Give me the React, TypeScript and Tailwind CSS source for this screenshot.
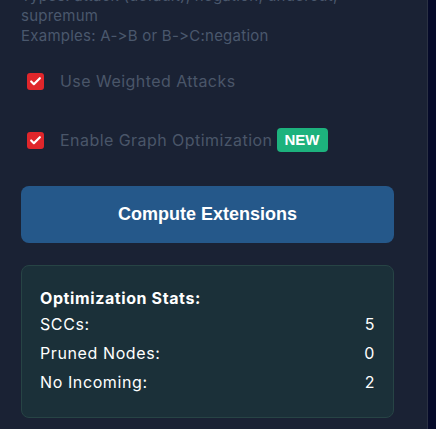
import { Check } from "lucide-react";

function CheckRow({ label, badge }: { label: string; badge?: boolean }) {
  return (
    <div className="flex items-center h-[26px]">
      <span className="ml-[6px] w-[17px] h-[17px] rounded-[3px] bg-[#e0262b] flex items-center justify-center">
        <Check className="w-[13px] h-[13px] text-white" strokeWidth={4} />
      </span>
      <span className="ml-[16px] text-[16px] tracking-[0.45px] text-[#4a5669]">{label}</span>
      {badge && (
        <span className="ml-[4px] h-[24px] px-[8px] rounded-[4px] bg-[#1db27d] text-white text-[15px] font-bold flex items-center font-['Liberation_Sans',sans-serif]">
          NEW
        </span>
      )}
    </div>
  );
}

export default function App() {
  const stats = [
    { label: "SCCs:", value: 5 },
    { label: "Pruned Nodes:", value: 0 },
    { label: "No Incoming:", value: 2 },
  ];

  return (
    <div className="flex h-screen w-full overflow-hidden bg-[#050a29] font-['Inter',sans-serif] [font-feature-settings:'calt'_0]">
      <div className="w-[428px] shrink-0 h-full bg-[#1a2234] border-r border-[#2b3243] px-[21px]">
        {/* help text, scrolled so the first line is cut */}
        <div className="-mt-[14px] text-[15px] tracking-[0.25px] leading-[20px] text-[#4a586d]">
          <p>
            Types: attack (default), negation, undercut,
            <br />
            supremum
          </p>
          <p>Examples: A-&gt;B or B-&gt;C:negation</p>
        </div>

        <div className="mt-[22px]">
          <CheckRow label="Use Weighted Attacks" />
        </div>
        <div className="mt-[33px]">
          <CheckRow label="Enable Graph Optimization" badge />
        </div>

        <button className="mt-[33px] w-[373px] h-[57px] rounded-[8px] bg-[#25588a] text-white text-[18px] font-bold font-['Liberation_Sans',sans-serif]">
          Compute Extensions
        </button>

        <div className="mt-[22px] w-[373px] h-[153px] rounded-[8px] bg-[#1b3039] border border-[#274445] px-[18px] pt-[20px] text-white tracking-[0.6px]">
          <div className="text-[16px] font-bold leading-[24px]">Optimization Stats:</div>
          {stats.map((s) => (
            <div key={s.label} className="flex justify-between text-[16px] leading-[30px] -mt-[1px] first-of-type:mt-0">
              <span>{s.label}</span>
              <span>{s.value}</span>
            </div>
          ))}
        </div>
      </div>
      <div className="flex-1" />
    </div>
  );
}
